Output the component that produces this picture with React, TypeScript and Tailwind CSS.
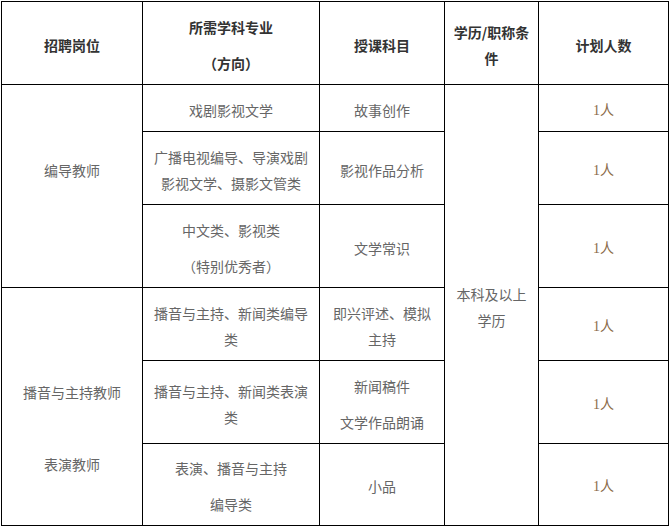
const font = { fontFamily: '"Noto Sans CJK SC", "Noto Sans", sans-serif' };

type Cell = {
  lines: string[];
  col: string;
  row: string;
  head?: boolean;
  count?: boolean;
  extra?: string;
};

const cells: Cell[] = [
  { lines: ["招聘岗位"], col: "col-start-1", row: "row-start-1", head: true },
  { lines: ["所需学科专业", "（方向）"], col: "col-start-2", row: "row-start-1", head: true },
  { lines: ["授课科目"], col: "col-start-3", row: "row-start-1", head: true },
  { lines: ["学历/职称条件"], col: "col-start-4", row: "row-start-1", head: true },
  { lines: ["计划人数"], col: "col-start-5", row: "row-start-1", head: true },

  { lines: ["编导教师"], col: "col-start-1", row: "row-start-2 row-span-3", extra: "pb-[36px]" },
  { lines: ["戏剧影视文学"], col: "col-start-2", row: "row-start-2" },
  { lines: ["故事创作"], col: "col-start-3", row: "row-start-2" },
  { lines: ["本科及以上学历"], col: "col-start-4", row: "row-start-2 row-span-6" },
  { lines: ["1人"], col: "col-start-5", row: "row-start-2", count: true },

  { lines: ["广播电视编导、导演戏剧影视文学、摄影文管类"], col: "col-start-2", row: "row-start-3" },
  { lines: ["影视作品分析"], col: "col-start-3", row: "row-start-3" },
  { lines: ["1人"], col: "col-start-5", row: "row-start-3", count: true },

  { lines: ["中文类、影视类", "（特别优秀者）"], col: "col-start-2", row: "row-start-4" },
  { lines: ["文学常识"], col: "col-start-3", row: "row-start-4" },
  { lines: ["1人"], col: "col-start-5", row: "row-start-4", count: true },

  { lines: ["播音与主持、新闻类编导类"], col: "col-start-2", row: "row-start-5" },
  { lines: ["即兴评述、模拟主持"], col: "col-start-3", row: "row-start-5" },
  { lines: ["1人"], col: "col-start-5", row: "row-start-5", count: true },

  { lines: ["播音与主持、新闻类表演类"], col: "col-start-2", row: "row-start-6" },
  { lines: ["新闻稿件", "文学作品朗诵"], col: "col-start-3", row: "row-start-6" },
  { lines: ["1人"], col: "col-start-5", row: "row-start-6", count: true },

  { lines: ["表演、播音与主持", "编导类"], col: "col-start-2", row: "row-start-7" },
  { lines: ["小品"], col: "col-start-3", row: "row-start-7" },
  { lines: ["1人"], col: "col-start-5", row: "row-start-7", count: true },
];

export default function App() {
  return (
    <div className="w-[670px] h-[528px] bg-white pl-[1px] pt-[1px]" style={font}>
      <div className="grid w-max grid-cols-[140px_176px_124px_93px_129px] grid-rows-[82px_46px_72px_82px_72px_82px_81px] gap-[1px] bg-black p-[1px]">
        {cells.map((c, i) => (
          <div
            key={i}
            className={`${c.col} ${c.row} ${c.extra ?? ""} flex flex-col items-center justify-center gap-[10px] bg-white px-[7px] pt-[3px] text-center text-[14px] leading-[26px] ${
              c.head ? "font-bold text-[#333333]" : "text-[#666666]"
            }`}
          >
            {c.count ? (
              <p className="text-[#8b6b4a]">
                <span style={{ fontFamily: '"Liberation Serif", serif' }}>1</span>人
              </p>
            ) : (
              c.lines.map((l) => <p key={l}>{l}</p>)
            )}
          </div>
        ))}

        {/* 播音与主持教师 / 表演教师 share one merged cell */}
        <div className="col-start-1 row-start-5 row-span-3 flex flex-col items-center justify-center gap-[46px] bg-white px-[7px] pt-[42px] text-center text-[14px] leading-[26px] text-[#666666]">
          <p>播音与主持教师</p>
          <p>表演教师</p>
        </div>
      </div>
    </div>
  );
}
